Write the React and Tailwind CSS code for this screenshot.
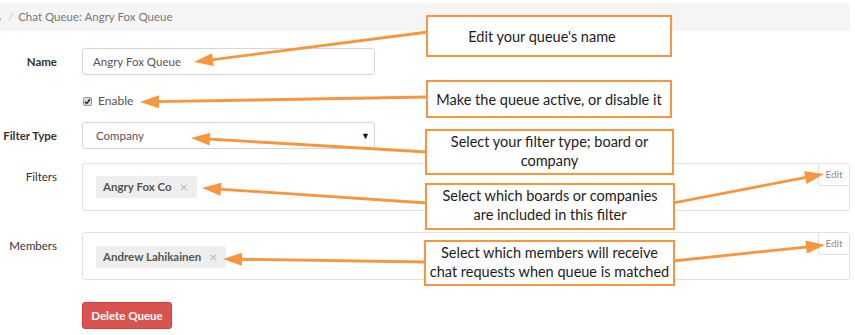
import React from "react";

const ORANGE = "#f7963f";

function Arrow({ x1, y1, x2, y2 }) {
  const dx = x2 - x1;
  const dy = y2 - y1;
  const len = Math.sqrt(dx * dx + dy * dy);
  const ux = dx / len;
  const uy = dy / len;
  const hl = 19;
  const hw = 6.5;
  const bx = x2 - ux * hl;
  const by = y2 - uy * hl;
  const px = -uy;
  const py = ux;
  const pts = `${x2},${y2} ${bx + px * hw},${by + py * hw} ${bx - px * hw},${by - py * hw}`;
  return (
    <g>
      <line x1={x1} y1={y1} x2={bx + ux * 2} y2={by + uy * 2} stroke={ORANGE} strokeWidth="2.8" />
      <polygon points={pts} fill={ORANGE} />
    </g>
  );
}

function Callout({ className, children }) {
  return (
    <div
      className={`absolute flex items-center justify-center whitespace-nowrap border-2 border-[#f7963f] bg-white text-center text-[14.5px] leading-[19px] text-[#1c1c1c] ${className}`}
      style={{ fontFamily: "Lato, 'Open Sans', sans-serif" }}
    >
      {children}
    </div>
  );
}

function Tag({ children }) {
  return (
    <span className="flex h-[22px] items-center rounded-[2px] bg-[#eeeeee] pl-[7px] pr-[9px] text-[11.5px] font-bold text-[#555555]">
      {children}
      <span className="ml-[8px] text-[14px] font-normal leading-none text-[#b5b5b5]">×</span>
    </span>
  );
}

function EditBtn() {
  return (
    <div className="absolute right-0 top-0 flex h-[22px] w-[31px] items-center justify-center rounded-bl-[3px] border-b border-l border-[#e2e2e2] bg-white text-[10px] text-[#8a8a8a]">
      Edit
    </div>
  );
}

export default function App() {
  return (
    <div
      className="relative h-[335px] w-[855px] overflow-hidden bg-white pt-[3px] text-[#333333]"
      style={{ fontFamily: "Lato, 'Open Sans', sans-serif" }}
    >
      {/* breadcrumb */}
      <div className="flex h-[28px] w-[850px] items-center overflow-hidden rounded-r-[4px] bg-[#f5f5f5] text-[11.5px] text-[#777777]">
        <span className="ml-[-4px] text-[#5b8fc2]">s</span>
        <span className="ml-[7px] text-[#c8c8c8]">/</span>
        <span className="ml-[5px]">Chat Queue: Angry Fox Queue</span>
      </div>

      {/* form */}
      <div className="flex w-[850px] flex-col">
        <div className="mt-[17px] flex h-[27px] items-center">
          <div className="w-[57px] text-right text-[11.5px] font-bold">Name</div>
          <div className="ml-[25px] flex h-[27px] w-[293px] items-center rounded-[3px] border border-[#d5d5d5] pl-[10px] text-[11.5px] text-[#555555]">
            Angry Fox Queue
          </div>
        </div>

        <div className="mt-[19px] flex h-[14px] items-center pl-[83px]">
          <span className="flex h-[9px] w-[9px] items-center justify-center rounded-[2px] border border-[#9a9a9a] bg-[#dcdcdc]">
            <svg width="7" height="7" viewBox="0 0 8 8">
              <path d="M1 4.2 L3.1 6.3 L7 1.5" fill="none" stroke="#222" strokeWidth="1.6" />
            </svg>
          </span>
          <span className="ml-[6px] text-[12px] text-[#555555]">Enable</span>
        </div>

        <div className="mt-[14px] flex h-[27px] items-center">
          <div className="w-[57px] whitespace-nowrap text-right text-[11.5px] font-bold">Filter Type</div>
          <div className="relative ml-[25px] flex h-[27px] w-[293px] items-center rounded-[3px] border border-[#d5d5d5] pl-[13px] text-[11.5px] text-[#555555]">
            Company
            <span className="absolute right-[4px] top-[6px] text-[9px] text-[#111111]">▼</span>
          </div>
        </div>

        <div className="mt-[14px] flex h-[48px]">
          <div className="w-[57px] pt-[5px] text-right text-[11.5px]">Filters</div>
          <div className="relative ml-[25px] flex h-[48px] flex-1 items-start rounded-[3px] border border-[#e0e0e0] pl-[13px] pt-[12px]">
            <Tag>Angry Fox Co</Tag>
            <EditBtn />
          </div>
        </div>

        <div className="mt-[21px] flex h-[48px]">
          <div className="w-[57px] pt-[5px] text-right text-[11.5px]">Members</div>
          <div className="relative ml-[25px] flex h-[48px] flex-1 items-start rounded-[3px] border border-[#e0e0e0] pl-[13px] pt-[13px]">
            <Tag>Andrew Lahikainen</Tag>
            <EditBtn />
          </div>
        </div>

        <div className="mt-[22px] pl-[82px]">
          <button className="flex h-[27px] w-[90px] items-center justify-center rounded-[3px] border border-[#d43f3a] bg-[#d9534f] text-[11.5px] font-bold text-white">
            Delete Queue
          </button>
        </div>
      </div>

      {/* arrows overlay */}
      <svg className="pointer-events-none absolute left-0 top-0" width="855" height="335">
        <Arrow x1={428} y1={32} x2={194} y2={62} />
        <Arrow x1={428} y1={97} x2={140} y2={102} />
        <Arrow x1={427} y1={152} x2={191} y2={138} />
        <Arrow x1={427} y1={203} x2={202} y2={188} />
        <Arrow x1={673} y1={203} x2={824} y2={174} />
        <Arrow x1={426} y1={262} x2={223} y2={259} />
        <Arrow x1={673} y1={261} x2={825} y2={245} />
      </svg>

      {/* callouts */}
      <Callout className="left-[426px] top-[15px] h-[42px] w-[246px] pr-[14px]">Edit your queue's name</Callout>
      <Callout className="left-[426px] top-[80px] h-[38px] w-[246px]">Make the queue active, or disable it</Callout>
      <Callout className="left-[425px] top-[129px] h-[46px] w-[249px] pb-[2px]">
        Select your filter type; board or
        <br />
        company
      </Callout>
      <Callout className="left-[425px] top-[183px] h-[47px] w-[250px] pb-[4px]">
        Select which boards or companies
        <br />
        are included in this filter
      </Callout>
      <Callout className="left-[424px] top-[240px] h-[46px] w-[251px] pb-[2px]">
        Select which members will receive
        <br />
        chat requests when queue is matched
      </Callout>
    </div>
  );
}
